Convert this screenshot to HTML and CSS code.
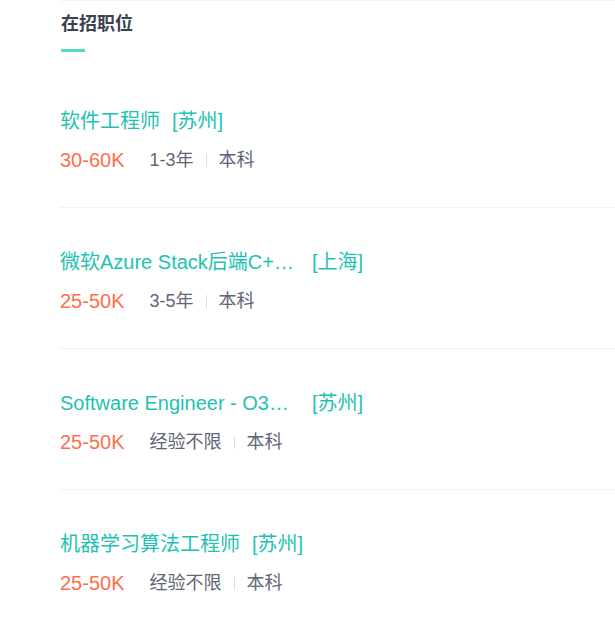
FILE: index.html
```html
<!DOCTYPE html>
<html>
  <head>
    <meta charset="utf-8">
    <title>在招职位</title>
    <link rel="stylesheet" href="styles.css">
  </head>
  <body>
    <div class="job-panel">
      <h2 class="panel-title">在招职位</h2>
      <div class="title-bar"></div>
      <ul class="job-list">
        <li class="job-item">
          <div class="job-head">
            <span class="job-name">软件工程师</span>
            <span class="job-city">[苏州]</span>
          </div>
          <div class="job-meta">
            <span class="salary">30-60K</span>
            <span class="req">1-3年</span>
            <span class="sep"></span>
            <span class="req">本科</span>
          </div>
        </li>
        <li class="job-item">
          <div class="job-head">
            <span class="job-name">微软Azure Stack后端C++开发工程师</span>
            <span class="job-city">[上海]</span>
          </div>
          <div class="job-meta">
            <span class="salary">25-50K</span>
            <span class="req">3-5年</span>
            <span class="sep"></span>
            <span class="req">本科</span>
          </div>
        </li>
        <li class="job-item">
          <div class="job-head">
            <span class="job-name">Software Engineer - O365 Core</span>
            <span class="job-city">[苏州]</span>
          </div>
          <div class="job-meta">
            <span class="salary">25-50K</span>
            <span class="req">经验不限</span>
            <span class="sep"></span>
            <span class="req">本科</span>
          </div>
        </li>
        <li class="job-item">
          <div class="job-head">
            <span class="job-name">机器学习算法工程师</span>
            <span class="job-city">[苏州]</span>
          </div>
          <div class="job-meta">
            <span class="salary">25-50K</span>
            <span class="req">经验不限</span>
            <span class="sep"></span>
            <span class="req">本科</span>
          </div>
        </li>
      </ul>
    </div>
  </body>
</html>
```

FILE: styles.css
```css
body {
  background: #FFF;
  font-family: "Liberation Sans", "Noto Sans CJK SC", sans-serif;
  margin: 0;
}

.job-panel {
  border-top: 1px solid #F4F4F4;
  margin-left: 60px;
  padding-top: 11px;
}

.panel-title {
  color: #3D4150;
  font-size: 18px;
  font-weight: bold;
  line-height: 24px;
  margin: 0;
  padding-left: 1px;
}

.title-bar {
  background: #5DD5C8;
  height: 3px;
  margin-left: 1px;
  margin-top: 13px;
  width: 24px;
}

.job-list {
  list-style: none;
  margin: 15px 0 0 0;
  padding: 0;
}

.job-item {
  border-bottom: 1px solid #F2F2F2;
  padding: 42px 0 35px 0;
}

.job-head {
  color: #1EC2B3;
  display: flex;
  font-size: 20px;
  line-height: 24px;
}

.job-name {
  max-width: 240px;
  overflow: hidden;
  text-overflow: ellipsis;
  white-space: nowrap;
}

.job-city {
  margin-left: 12px;
  white-space: nowrap;
}

.job-meta {
  align-items: center;
  display: flex;
  font-size: 18px;
  line-height: 24px;
  margin-top: 15px;
}

.salary {
  color: #FE6E4A;
  font-size: 20px;
  margin-right: 25px;
}

.req {
  color: #5E6577;
}

.sep {
  background: #DDD;
  height: 13px;
  margin: 0 12px;
  width: 1px;
}
```
